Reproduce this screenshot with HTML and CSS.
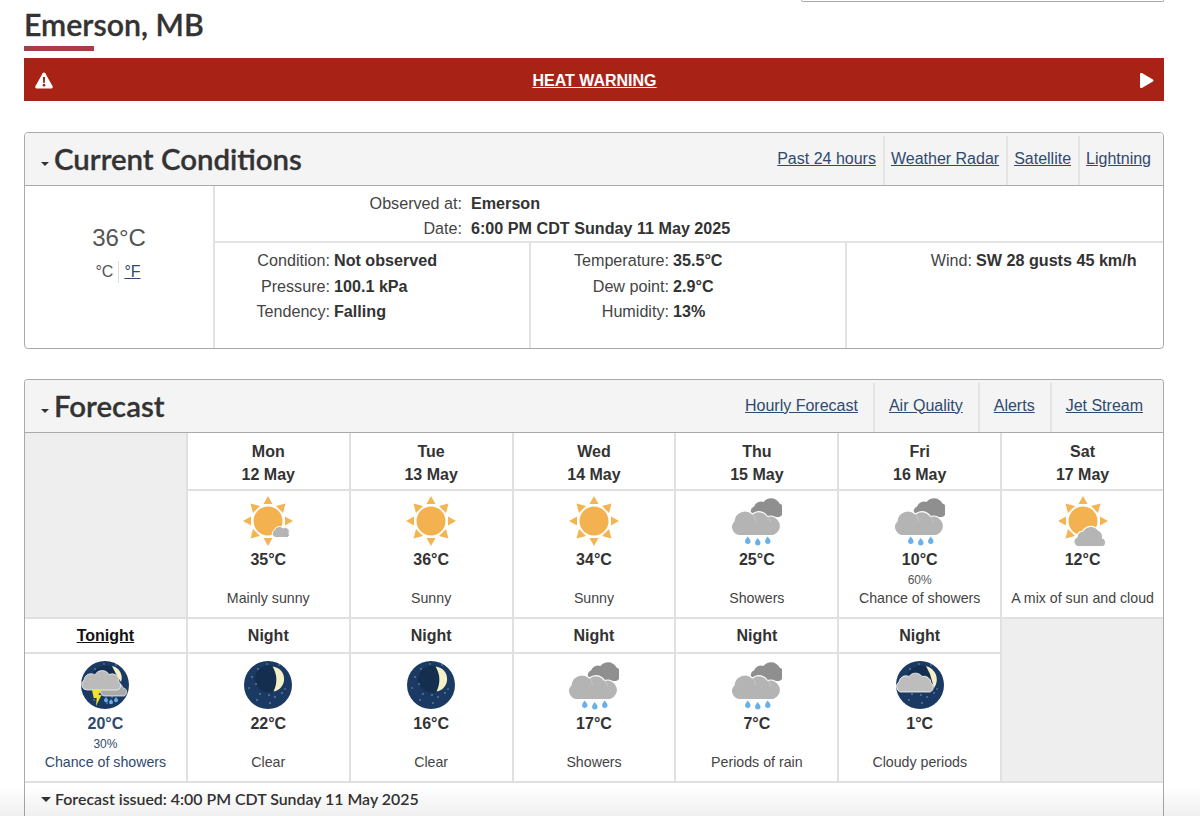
FILE: index.html
```html
<!DOCTYPE html>
<html lang="en">
<head>
<meta charset="utf-8">
<title>Emerson, MB</title>
<link rel="stylesheet" href="styles.css">
</head>
<body>
<svg class="defs" xmlns="http://www.w3.org/2000/svg">
  <symbol id="rays" viewBox="0 0 50 50">
    <g fill="#f3b453">
      <path d="M25 0l4.500 8h-9z"/>
      <path d="M25 50l4.500-8h-9z"/>
      <path d="M0 25l8-4.500v9z"/>
      <path d="M50 25l-8-4.500v9z"/>
      <path d="M7.500 7.500l9.500 2.500-7 7z"/>
      <path d="M42.500 7.500l-9.500 2.500 7 7z"/>
      <path d="M7.500 42.500l9.500-2.500-7-7z"/>
      <path d="M42.500 42.500l-9.500-2.500 7-7z"/>
    </g>
  </symbol>
  <symbol id="sun" viewBox="0 0 50 50">
    <use href="#rays" width="50" height="50"/>
    <circle cx="25" cy="25" r="14.500" fill="#f3b24f"/>
  </symbol>
  <symbol id="sun-small-cloud" viewBox="0 0 50 50">
    <use href="#sun" width="50" height="50"/>
    <path d="M33 41.500a3.800 3.800 0 0 1-1.500-7.300a5 5 0 0 1 8.500-2.200a4.200 4.200 0 0 1 6 5.300a3 3 0 0 1-1.500 4.200z" fill="#b4b4b4" stroke="#fff" stroke-width="1"/>
  </symbol>
  <symbol id="sun-cloud" viewBox="0 0 50 50">
    <use href="#sun" width="50" height="50"/>
    <path d="M22 50.500a5 5 0 0 1-3-9.500a6 6 0 0 1 6-6a9 9 0 0 1 15-1a7 7 0 0 1 4.500 8a4.700 4.700 0 0 1 1 8.500z" fill="#b5b5b5" stroke="#fff" stroke-width="1.200"/>
  </symbol>
  <symbol id="rain" viewBox="0 0 50 50">
    <path d="M24 21a5.500 5.500 0 0 1-2-10.500a7.500 7.500 0 0 1 9.500-4.500a9.500 9.500 0 0 1 16 1.500a7 7 0 0 1 2.500 11.500a5 5 0 0 1-3 2z" fill="#8f8f8f"/>
    <path d="M8.500 39.500A8.500 8.500 0 0 1 2 25A11 11 0 0 1 20.500 18A10 10 0 0 1 35.500 20.500A9.500 9.500 0 0 1 41.500 39.500Z" fill="#b4b4b4" stroke="#fff" stroke-width="1.200"/>
    <path d="M20.500 18a11 11 0 0 1 3 7M35.500 20.500a10 10 0 0 1 3 6" fill="none" stroke="#c6c6c6" stroke-width="1"/>
    <g fill="#69b0e8">
      <path d="M15.500 40.500c1.500 2 3 3 3 4.700a2.700 2.700 0 0 1-5.400 0c0-1.700 1.500-2.700 2.400-4.700z"/>
      <path d="M25.500 42c1.500 2 3 3 3 4.700a2.700 2.700 0 0 1-5.400 0c0-1.700 1.500-2.700 2.400-4.700z"/>
      <path d="M35.500 40.500c1.500 2 3 3 3 4.700a2.700 2.700 0 0 1-5.400 0c0-1.700 1.500-2.700 2.400-4.700z"/>
    </g>
  </symbol>
  <symbol id="night" viewBox="0 0 50 50">
    <circle cx="25" cy="25" r="24" fill="#1b3a63"/>
    <ellipse cx="26" cy="19" rx="14" ry="13.500" fill="#142e50"/>
    <g fill="#8fa3bd">
      <circle cx="9" cy="17" r=".8"/><circle cx="15" cy="9" r=".8"/><circle cx="13" cy="24" r=".8"/>
      <circle cx="6" cy="28" r=".7"/><circle cx="17" cy="34" r=".8"/><circle cx="26" cy="35" r=".8"/>
      <circle cx="32" cy="37" r=".8"/><circle cx="14" cy="40" r=".8"/><circle cx="27" cy="43" r=".8"/>
      <circle cx="39" cy="33" r=".8"/><circle cx="42" cy="29" r=".7"/><circle cx="24" cy="4" r=".7"/>
      <circle cx="36" cy="5" r=".7"/>
    </g>
  </symbol>
  <symbol id="moon" viewBox="0 0 50 50">
    <use href="#night" width="50" height="50"/>
    <path d="M29.500 6.500A12.600 12.600 0 0 1 30.500 31.500A25 25 0 0 0 29.500 6.500z" fill="#f5f1c6"/>
  </symbol>
  <symbol id="moon-cloud" viewBox="0 0 50 50">
    <use href="#night" width="50" height="50"/>
    <path d="M31 6A14 14 0 0 1 39 28L35 14z" fill="#f5f1c6"/>
    <path d="M8 32A5.500 5.500 0 0 1 4 22A7 7 0 0 1 14 16.500A8 8 0 0 1 27 16.500A7 7 0 0 1 36 23A5 5 0 0 1 35 32Z" fill="#bdbdbd" stroke="#fff" stroke-width=".8"/>
  </symbol>
  <symbol id="moon-storm" viewBox="0 0 50 50">
    <use href="#night" width="50" height="50"/>
    <path d="M32 6A12 12 0 0 1 41 22L36 14z" fill="#f5f1c6"/>
    <path d="M24 36A4.500 4.500 0 0 1 23 27.500L34 24A6 6 0 0 1 43 28A4 4 0 0 1 42 36Z" fill="#a9a9a9" stroke="#fff" stroke-width=".7"/>
    <path d="M7 30A5.500 5.500 0 0 1 4 20A7 7 0 0 1 15 15A8 8 0 0 1 29 14.500A7 7 0 0 1 39 22A4.500 4.500 0 0 1 37 30Z" fill="#bbb" stroke="#fff" stroke-width=".7"/>
    <path d="M12 30h9l-2.500 5h3l-5.500 11 .7-8h-3z" fill="#f3e321"/>
    <g fill="#69b0e8">
      <path d="M26 37c1 1.400 2 2.100 2 3.300a2 2 0 0 1-4 0c0-1.200 1.300-1.900 2-3.300z"/>
      <path d="M36 37c1 1.400 2 2.100 2 3.300a2 2 0 0 1-4 0c0-1.200 1.300-1.900 2-3.300z"/>
      <path d="M31 39c1 1.400 2 2.100 2 3.300a2 2 0 0 1-4 0c0-1.200 1.300-1.900 2-3.300z"/>
    </g>
  </symbol>
</svg>

<main class="page">
  <div class="search-edge"></div>
  <h1 class="title">Emerson, MB</h1>
  <div class="title-rule"></div>

  <div class="alert">
    <span class="alert-side">
      <svg class="alert-icon" viewBox="0 0 18 17" aria-hidden="true"><path d="M9 .5c.6 0 1 .3 1.300.8l7.300 13c.5 1-.2 2.200-1.300 2.200H1.700C.6 16.500-.1 15.300.4 14.300l7.300-13C8 .8 8.400.5 9 .5z" fill="#fff"/><path d="M7.900 5h2.200l-.3 6H8.200zM9 11.800a1.400 1.400 0 1 1 0 2.800a1.400 1.400 0 0 1 0-2.800z" fill="#a82315"/></svg>
    </span>
    <a class="alert-link" href="#">HEAT WARNING</a>
    <span class="alert-side alert-side-end">
      <svg class="alert-arrow" viewBox="0 0 15 17" aria-hidden="true"><path d="M1 2.200c0-1 1-1.600 1.900-1.100l11 6.300c.8.500.8 1.700 0 2.200l-11 6.300c-.9.500-1.900-.1-1.900-1.100z" fill="#fff"/></svg>
    </span>
  </div>

  <section class="panel panel-current">
    <header class="panel-head">
      <h2 class="panel-title"><span class="caret"></span>Current Conditions</h2>
      <nav class="panel-nav nav-tight">
        <a href="#">Past 24 hours</a><a href="#">Weather Radar</a><a href="#">Satellite</a><a href="#">Lightning</a>
      </nav>
    </header>
    <div class="current-body">
      <div class="current-temp">
        <div class="temp-now">36°C</div>
        <div class="temp-units"><span class="unit">°C</span><a class="unit unit-link" href="#">°F</a></div>
      </div>
      <div class="current-detail">
        <dl class="observed">
          <dt>Observed at:</dt><dd>Emerson</dd>
          <dt>Date:</dt><dd>6:00 PM CDT Sunday 11 May 2025</dd>
        </dl>
        <div class="detail-cols">
          <dl class="detail-col col-a">
            <dt>Condition:</dt><dd>Not observed</dd>
            <dt>Pressure:</dt><dd>100.1 kPa</dd>
            <dt>Tendency:</dt><dd>Falling</dd>
          </dl>
          <dl class="detail-col col-b">
            <dt>Temperature:</dt><dd>35.5°C</dd>
            <dt>Dew point:</dt><dd>2.9°C</dd>
            <dt>Humidity:</dt><dd>13%</dd>
          </dl>
          <dl class="detail-col col-c">
            <dt>Wind:</dt><dd>SW 28 gusts 45 km/h</dd>
          </dl>
        </div>
      </div>
    </div>
  </section>

  <section class="panel panel-forecast">
    <header class="panel-head">
      <h2 class="panel-title"><span class="caret"></span>Forecast</h2>
      <nav class="panel-nav nav-wide">
        <a href="#">Hourly Forecast</a><a href="#">Air Quality</a><a href="#">Alerts</a><a href="#">Jet Stream</a>
      </nav>
    </header>
    <div class="forecast-grid">
      <div class="cell-blank"></div>
      <div class="day">Mon<br>12 May</div>
      <div class="day">Tue<br>13 May</div>
      <div class="day">Wed<br>14 May</div>
      <div class="day">Thu<br>15 May</div>
      <div class="day">Fri<br>16 May</div>
      <div class="day">Sat<br>17 May</div>

      <div class="fc"><svg class="wx"><use href="#sun-small-cloud"/></svg><div class="temp">35°C</div><div class="pop"></div><div class="sum">Mainly sunny</div></div>
      <div class="fc"><svg class="wx"><use href="#sun"/></svg><div class="temp">36°C</div><div class="pop"></div><div class="sum">Sunny</div></div>
      <div class="fc"><svg class="wx"><use href="#sun"/></svg><div class="temp">34°C</div><div class="pop"></div><div class="sum">Sunny</div></div>
      <div class="fc"><svg class="wx"><use href="#rain"/></svg><div class="temp">25°C</div><div class="pop"></div><div class="sum">Showers</div></div>
      <div class="fc"><svg class="wx"><use href="#rain"/></svg><div class="temp">10°C</div><div class="pop">60%</div><div class="sum">Chance of showers</div></div>
      <div class="fc"><svg class="wx"><use href="#sun-cloud"/></svg><div class="temp">12°C</div><div class="pop"></div><div class="sum">A mix of sun and cloud</div></div>

      <div class="night-head"><a href="#">Tonight</a></div>
      <div class="night-head">Night</div>
      <div class="night-head">Night</div>
      <div class="night-head">Night</div>
      <div class="night-head">Night</div>
      <div class="night-head">Night</div>
      <div class="cell-blank"></div>

      <div class="fc fc-night fc-link"><svg class="wx"><use href="#moon-storm"/></svg><div class="temp">20°C</div><div class="pop">30%</div><div class="sum">Chance of showers</div></div>
      <div class="fc fc-night"><svg class="wx"><use href="#moon"/></svg><div class="temp">22°C</div><div class="pop"></div><div class="sum">Clear</div></div>
      <div class="fc fc-night"><svg class="wx"><use href="#moon"/></svg><div class="temp">16°C</div><div class="pop"></div><div class="sum">Clear</div></div>
      <div class="fc fc-night"><svg class="wx"><use href="#rain"/></svg><div class="temp">17°C</div><div class="pop"></div><div class="sum">Showers</div></div>
      <div class="fc fc-night"><svg class="wx"><use href="#rain"/></svg><div class="temp">7°C</div><div class="pop"></div><div class="sum">Periods of rain</div></div>
      <div class="fc fc-night"><svg class="wx"><use href="#moon-cloud"/></svg><div class="temp">1°C</div><div class="pop"></div><div class="sum">Cloudy periods</div></div>
    </div>
    <div class="issued"><span class="caret caret-issued"></span>Forecast issued: 4:00 PM CDT Sunday 11 May 2025</div>
  </section>
</main>
<div class="bottom-fade"></div>
</body>
</html>
```

FILE: styles.css
```css
* { box-sizing: border-box; }

html, body {
  margin: 0;
  padding: 0;
  background: #fff;
}

body {
  font-family: "Liberation Sans", Arial, sans-serif;
  font-size: 16px;
  color: #333;
  height: 816px;
  overflow: hidden;
}

.defs { display: none; }

.page {
  width: 1140px;
  margin-left: 24px;
}

.search-edge {
  height: 2px;
  margin-left: 777px;
  border: 1px solid #aaa;
  border-top: 0;
  border-radius: 0 0 3px 3px;
}

.title {
  margin: 0;
  font-family: Lato, sans-serif;
  font-size: 30.300px;
  font-weight: 600;
  line-height: 44px;
  color: #333;
  -webkit-text-stroke: .3px #333;
}

.title-rule {
  width: 70px;
  height: 5px;
  margin-bottom: 7px;
  background: #a53d47;
}

.alert {
  display: flex;
  align-items: center;
  justify-content: space-between;
  height: 43px;
  padding: 0 10px 0 11px;
  margin-bottom: 31px;
  background: #a82315;
}

.alert-side { display: flex; width: 60px; }
.alert-side-end { justify-content: flex-end; }
.alert-icon { width: 18px; height: 17px; margin-top: 2px; }
.alert-arrow { width: 15px; height: 17px; margin-top: 2px; }

.alert-link {
  padding-top: 2px;
  color: #fff;
  font-weight: 700;
  font-size: 16px;
  text-decoration: underline;
}

.panel {
  border: 1px solid #aaa;
  border-radius: 4px;
}

.panel-current {
  height: 217px;
  margin-bottom: 30px;
}

.panel-forecast {
  height: 437px;
  border-bottom: 0;
  border-radius: 4px 4px 0 0;
}

.panel-head {
  display: flex;
  justify-content: space-between;
  align-items: stretch;
  height: 53px;
  padding-top: 3px;
  background: #f4f4f4;
  border-bottom: 1px solid #aaa;
  border-radius: 3px 3px 0 0;
}

.panel-title {
  display: flex;
  align-items: center;
  margin: 0;
  padding: 0 0 4px 16px;
  font-family: Lato, sans-serif;
  font-size: 29.400px;
  font-weight: 600;
  color: #333;
  -webkit-text-stroke: .3px #333;
}

.caret {
  display: inline-block;
  width: 0;
  height: 0;
  margin: 10px 5px 0 0;
  border-style: solid;
  border-width: 4px 4px 0;
  border-color: #333 transparent transparent;
}

.panel-nav {
  display: flex;
  align-items: stretch;
}

.panel-nav a {
  display: flex;
  align-items: center;
  padding-bottom: 4px;
  color: #2f4a6e;
  font-size: 16px;
  text-decoration: underline;
  border-left: 2px solid #e4e4e4;
}

.panel-nav a:first-child { border-left: 0; }

.nav-tight { padding-right: 5px; }
.nav-tight a { padding-left: 6px; padding-right: 7px; }
.nav-wide { padding-right: 5px; }
.nav-wide a { padding-left: 14px; padding-right: 15px; }

.current-body {
  display: grid;
  grid-template-columns: 190px 1fr;
  height: 162px;
}

.current-temp {
  padding-top: 38px;
  text-align: center;
  border-right: 2px solid #e2e2e2;
}

.temp-now {
  font-size: 24px;
  line-height: 28px;
  color: #555;
}

.temp-units {
  display: flex;
  justify-content: center;
  margin-top: 9px;
  padding-right: 2px;
  line-height: 22px;
  font-size: 16px;
}

.unit { padding: 0 5px; color: #555; }
.unit-link { color: #2f4a6e; border-left: 1px solid #ddd; }

.observed {
  display: grid;
  grid-template-columns: 247px 1fr;
  column-gap: 9px;
  align-content: center;
  height: 57px;
  margin: 0;
  padding-top: 5px;
  border-bottom: 2px solid #e2e2e2;
  line-height: 25px;
  font-size: 16.150px;
}

dt { text-align: right; color: #444; }
dd { margin: 0; font-weight: 700; color: #333; }

.detail-cols {
  display: grid;
  grid-template-columns: 1fr 1fr 1fr;
  height: 105px;
}

.detail-col {
  display: grid;
  align-content: start;
  column-gap: 4px;
  margin: 0;
  padding-top: 5px;
  line-height: 25.500px;
  font-size: 16.150px;
  border-right: 2px solid #e2e2e2;
}

.detail-col:last-child { border-right: 0; }
.col-a { grid-template-columns: 115px 1fr; }
.col-b { grid-template-columns: 138px 1fr; }
.col-c { grid-template-columns: 125px 1fr; }

.forecast-grid {
  display: grid;
  grid-template-columns: repeat(7, 1fr);
  grid-template-rows: 56px 126px 33px 127px;
  gap: 2px;
  padding-bottom: 2px;
  background: #e0e0e0;
}

.cell-blank {
  grid-row: span 2;
  background: #eee;
}

.day, .fc, .night-head {
  background: #fff;
  text-align: center;
}

.day {
  padding-top: 7px;
  font-weight: 700;
  font-size: 16px;
  line-height: 23px;
}

.night-head {
  font-weight: 700;
  font-size: 16px;
  line-height: 34px;
}

.night-head a { color: #111; text-decoration: underline; }

.fc {
  display: flex;
  flex-direction: column;
  align-items: center;
  padding-top: 5px;
  font-size: 14.200px;
}

.fc-night { padding-top: 6px; }

.wx {
  display: block;
  flex: none;
  width: 50px;
  height: 50px;
  margin-bottom: 3px;
}

.temp {
  font-weight: 700;
  font-size: 16px;
  line-height: 22px;
  color: #333;
}

.pop {
  height: 17px;
  font-size: 12px;
  line-height: 19px;
  color: #555;
}

.sum {
  line-height: 21px;
  color: #444;
}

.fc-link .temp, .fc-link .sum, .fc-link .pop { color: #2f4a6e; }

.issued {
  display: flex;
  align-items: center;
  height: 33px;
  padding: 0 0 2px 16px;
  font-family: Lato, sans-serif;
  font-size: 15.900px;
  font-weight: 600;
  color: #333;
}

.caret-issued {
  margin: 2px 4px 0 0;
  border-width: 5px 5px 0;
}

.bottom-fade {
  position: fixed;
  left: 0;
  right: 0;
  bottom: 0;
  height: 30px;
  background: linear-gradient(rgba(0,0,0,0), rgba(0,0,0,.06));
  pointer-events: none;
}
```
